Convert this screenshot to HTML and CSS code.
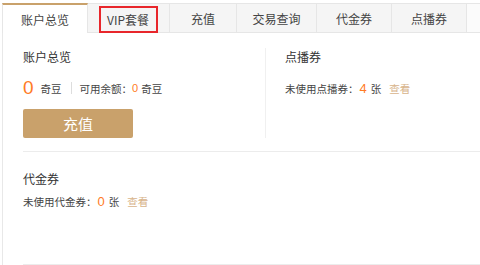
FILE: index.html
```html
<!DOCTYPE html>
<html lang="zh-CN">
<head>
<meta charset="utf-8">
<link rel="stylesheet" href="styles.css">
</head>
<body>
<div class="page">
  <div class="tabs">
    <div class="tab tab-account active">账户总览</div>
    <div class="tab tab-vip"><span class="mark">VIP套餐</span></div>
    <div class="tab tab-charge">充值</div>
    <div class="tab tab-trade">交易查询</div>
    <div class="tab tab-voucher">代金券</div>
    <div class="tab tab-ticket">点播券</div>
    <div class="tab-fill"></div>
  </div>
  <div class="content">
    <div class="section top">
      <div class="col left">
        <div class="title">账户总览</div>
        <div class="balance">
          <span class="big">0</span><span class="unit">奇豆</span><span class="sep"></span><span>可用余额：</span><span class="num-s">0</span><span>奇豆</span>
        </div>
        <button class="btn">充值</button>
      </div>
      <div class="col right">
        <div class="title">点播券</div>
        <div class="row row-right">未使用点播券：<span class="num">4</span><span>张</span><a class="link">查看</a></div>
      </div>
    </div>
    <div class="section bottom">
      <div class="title">代金券</div>
      <div class="row row-bottom">未使用代金券：<span class="num">0</span><span>张</span><a class="link">查看</a></div>
    </div>
  </div>
</div>
</body>
</html>
```
FILE: styles.css
```css
* { box-sizing: border-box; }
html, body { margin: 0; padding: 0; background: #fff; }
body {
  font-family: "Microsoft YaHei", "Noto Sans CJK SC", "Noto Sans", sans-serif;
  color: #333;
  font-size: 12px;
  width: 480px;
  height: 265px;
  overflow: hidden;
}
.page {
  margin-left: 2px;
  padding-top: 3px;
}
.tabs {
  display: flex;
  height: 30px;
  border-bottom: 1px solid #e6e6e6;
}
.tab {
  display: flex;
  align-items: center;
  justify-content: center;
  background: #f5f5f5;
  border-top: 1px solid #e6e6e6;
  border-right: 1px solid #e6e6e6;
  color: #444;
  font-size: 12px;
  padding-top: 1px;
}
.tab.active {
  background: #fff;
  border-top: 2px solid #c9a16b;
  border-left: 1px solid #e6e6e6;
  margin-bottom: -1px;
  padding-top: 0;
}
.tab-account { width: 86px; }
.tab-vip { width: 82px; }
.tab-charge { width: 67px; }
.tab-trade { width: 80px; }
.tab-voucher { width: 75px; }
.tab-ticket { width: 75px; }
.tab-fill {
  flex: 1;
  background: #fbfbfb;
  border-top: 1px solid #e6e6e6;
}
.mark {
  display: flex;
  align-items: center;
  justify-content: center;
  width: 59px;
  height: 27px;
  border: 2px solid #e8262b;
  margin-left: -1px;
  margin-top: 1px;
}
.content {
  border-left: 1px solid #e8e8e8;
  padding-left: 20px;
  height: 232px;
}
.section.top {
  display: flex;
  padding-top: 15px;
  padding-bottom: 13px;
  border-bottom: 1px solid #ececec;
}
.col.left {
  width: 242px;
}
.col.right {
  border-left: 1px solid #f0f0f0;
  padding-left: 19px;
  flex: 1;
}
.title {
  font-size: 12px;
  line-height: 18px;
  color: #333;
}
.balance {
  display: flex;
  align-items: center;
  margin-top: 10px;
  height: 24px;
  font-size: 10.5px;
  color: #444;
}
.big {
  font-size: 19px;
  color: #ff7b25;
  margin-right: 7px;
  font-family: "Liberation Sans", Arial, sans-serif;
}
.unit { margin-right: 9px; }
.sep {
  width: 1px;
  height: 12px;
  background: #ddd;
  margin-right: 8px;
}
.num-s {
  color: #ff7b25;
  margin: 0 3px 0 0;
  font-size: 11px;
  font-family: "Liberation Sans", Arial, sans-serif;
}
.btn {
  display: block;
  margin-top: 9px;
  width: 110px;
  height: 29px;
  border: none;
  border-radius: 2px;
  background: #c9a16b;
  color: #fff;
  font-family: inherit;
  font-size: 15px;
  padding: 0;
}
.row {
  font-size: 10.5px;
  line-height: 18px;
  color: #444;
  display: flex;
  align-items: center;
}
.row-right { margin-top: 14px; }
.num {
  color: #ff7b25;
  font-size: 13px;
  margin: 0 4px 0 1px;
  font-family: "Liberation Sans", Arial, sans-serif;
}
.link {
  color: #d8b48b;
  margin-left: 8px;
}
.section.bottom {
  padding-top: 18px;
  height: 113px;
  border-bottom: 1px solid #ececec;
}
.row-bottom { margin-top: 5px; }
```
